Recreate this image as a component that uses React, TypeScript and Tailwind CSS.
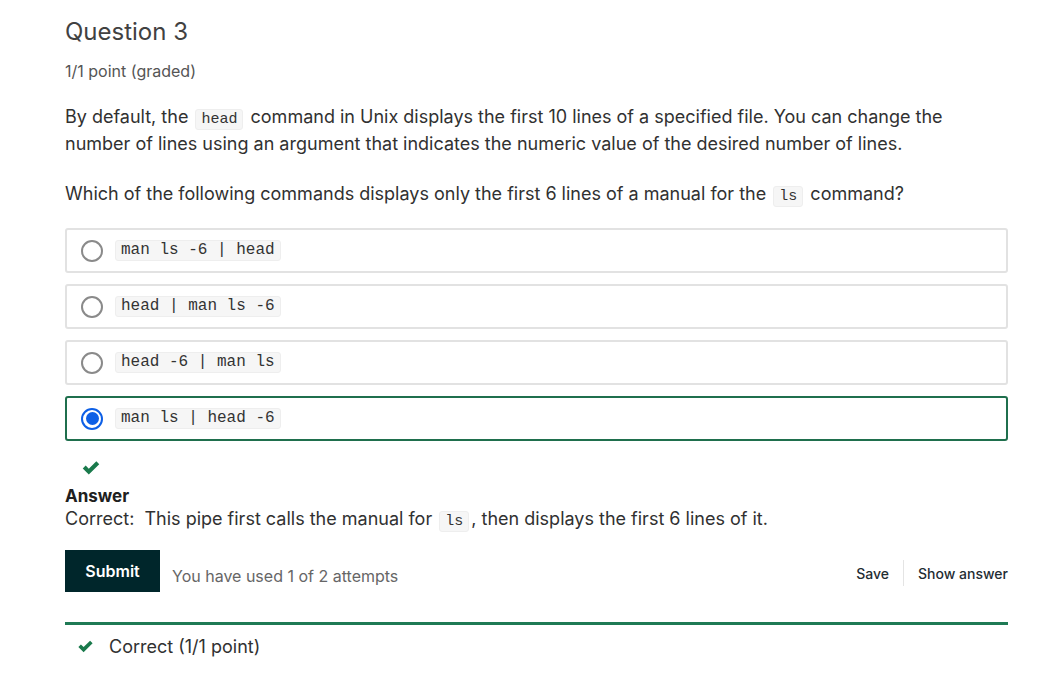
import React from "react";

const options = [
  "man ls -6 | head",
  "head | man ls -6",
  "head -6 | man ls",
  "man ls | head -6",
];

function Code({ children, big }: { children: React.ReactNode; big?: boolean }) {
  return (
    <code
      className={`inline-block rounded-[3px] border border-[#eeeeee] bg-[#f6f6f6] px-[5px] font-['Liberation_Mono',monospace] leading-[19px] text-[#333] ${
        big ? "text-[16px]" : "mx-[2px] text-[15px]"
      }`}
    >
      {children}
    </code>
  );
}

function Check({ className }: { className?: string }) {
  return (
    <svg viewBox="0 0 24 24" className={className} fill="currentColor">
      <path d="M3 12.5 L6.2 9.4 L9.6 12.7 L17.8 4.6 L21 7.8 L9.6 19.2 Z" />
    </svg>
  );
}

export default function App() {
  const selected = 3;
  return (
    <div className="min-h-[674px] bg-white font-['Inter',sans-serif] text-[#313131]">
      <div className="w-[943px] pl-[65px] pt-[17px] box-content">
        <h2 className="text-[24px] leading-[30px] text-[#414141]">Question 3</h2>
        <div className="mt-[14px] text-[16px] leading-[20px] text-[#555]">1/1 point (graded)</div>

        <p className="mt-[22px] text-[18px] leading-[27px]">
          By default, the <Code>head</Code> command in Unix displays the first 10 lines of a specified file. You can change the number of lines using an argument that indicates the numeric value of the desired number of lines.
        </p>
        <p className="mt-[23px] text-[18px] leading-[27px]">
          Which of the following commands displays only the first 6 lines of a manual for the <Code>ls</Code> command?
        </p>

        <div className="mt-[21px] flex flex-col gap-[11px]">
          {options.map((o, i) => (
            <div
              key={o}
              className={`flex h-[45px] items-center gap-[12px] rounded-[3px] border-2 pl-[14px] ${
                i === selected ? "border-[#1f6f4d]" : "border-[#e2e2e2]"
              }`}
            >
              {i === selected ? (
                <span className="flex h-[22px] w-[22px] items-center justify-center rounded-full border-2 border-[#0d5fe6]">
                  <span className="h-[13px] w-[13px] rounded-full bg-[#0d5fe6]" />
                </span>
              ) : (
                <span className="h-[22px] w-[22px] rounded-full border-2 border-[#8a8a8a]" />
              )}
              <Code big>{o}</Code>
            </div>
          ))}
        </div>

        <Check className="ml-[15px] mt-[16px] h-[22px] w-[22px] text-[#1a7a4c]" />

        <div className="mt-[6px] text-[17px] font-bold leading-[22px] text-[#202020]">Answer</div>
        <div className="text-[18px] leading-[24px]">
          Correct:&nbsp; This pipe first calls the manual for <Code>ls</Code>, then displays the first 6 lines of it.
        </div>

        <div className="mt-[18px] flex items-center">
          <button className="h-[42px] w-[95px] bg-[#00262b] text-[16px] font-semibold text-white">Submit</button>
          <span className="ml-[12px] mt-[10px] text-[16px] text-[#666]">You have used 1 of 2 attempts</span>
          <div className="ml-auto mt-[4px] flex items-center text-[14px] font-medium text-[#1f2d33]">
            <span>Save</span>
            <span className="mx-[14px] h-[26px] w-px bg-[#e4e4e4]" />
            <span>Show answer</span>
          </div>
        </div>

        <div className="mt-[30px] h-[3px] bg-[#1f7a55]" />
        <div className="mt-[8px] flex items-center gap-[14px] pl-[11px]">
          <Check className="h-[19px] w-[19px] text-[#1a7a4c]" />
          <span className="text-[18px] text-[#313131]">Correct (1/1 point)</span>
        </div>
      </div>
    </div>
  );
}
